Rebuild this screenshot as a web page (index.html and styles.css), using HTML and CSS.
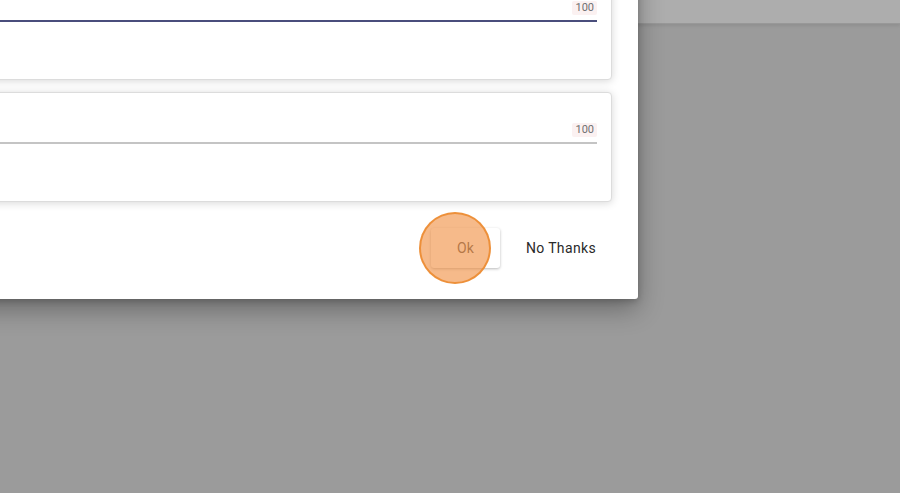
FILE: index.html
```html
<!DOCTYPE html>
<html lang="en">
<head>
  <meta charset="UTF-8">
  <meta name="viewport" content="width=device-width, initial-scale=1.0">
  <title>Dialog</title>
  <link rel="stylesheet" href="styles.css">
</head>
<body>
  <header class="topbar"></header>
  <main class="backdrop"></main>

  <div class="dialog">
    <div class="card">
      <div class="field focused">
        <span class="counter">100</span>
      </div>
    </div>
    <div class="card">
      <div class="field">
        <span class="counter">100</span>
      </div>
    </div>
    <div class="actions">
      <button class="btn btn-ok">Ok<span class="click-mark"></span></button>
      <button class="btn btn-text">No Thanks</button>
    </div>
  </div>
</body>
</html>
```

FILE: styles.css
```css
html, body {
  height: 100%;
}

body {
  margin: 0;
  font-family: Roboto, "Liberation Sans", sans-serif;
  background: #9b9b9b;
  display: flex;
  flex-direction: column;
  overflow: hidden;
}

.topbar {
  height: 23px;
  background: #adadad;
  border-bottom: 1px solid #989898;
  box-shadow: 0 2px 3px rgba(0, 0, 0, 0.08);
}

.backdrop {
  flex: 1;
}

.dialog {
  position: absolute;
  left: -300px;
  top: -54px;
  width: 938px;
  box-sizing: border-box;
  padding: 24px 26px 31px 24px;
  background: #ffffff;
  border-radius: 3px;
  box-shadow: 0 10px 26px rgba(0, 0, 0, 0.32), 0 2px 6px rgba(0, 0, 0, 0.2);
  display: flex;
  flex-direction: column;
  gap: 12px;
}

.card {
  height: 110px;
  box-sizing: border-box;
  padding: 22px 14px 0;
  background: #fff;
  border: 1px solid #dcdcdc;
  border-radius: 4px;
  box-shadow: 0 1px 8px rgba(0, 0, 0, 0.16);
}

.field {
  height: 29px;
  box-sizing: border-box;
  display: flex;
  justify-content: flex-end;
  align-items: flex-end;
  padding-bottom: 5px;
  border-bottom: 2px solid #c4c4c4;
}

.field.focused {
  border-bottom-color: #4a4e7c;
}

.counter {
  font-size: 11px;
  line-height: 14px;
  color: #707070;
  background: #fbf1f1;
  padding: 0 3px;
  border-radius: 2px;
}

.actions {
  display: flex;
  justify-content: flex-end;
  gap: 10px;
  margin-top: 14px;
}

.btn {
  height: 40px;
  border: none;
  font-family: inherit;
  font-size: 14px;
  color: #2a2a2a;
  background: transparent;
  cursor: pointer;
}

.btn-ok {
  position: relative;
  width: 69px;
  padding: 0;
  color: #5a5a5a;
  background: #fff;
  border-radius: 3px;
  box-shadow: 0 1px 3px rgba(0, 0, 0, 0.28);
}

.btn-text {
  padding: 0 16px;
  letter-spacing: 0.35px;
}

.click-mark {
  position: absolute;
  left: -12px;
  top: -16px;
  width: 68px;
  height: 68px;
  border-radius: 50%;
  background: rgba(240, 140, 60, 0.6);
  border: 2px solid rgba(236, 140, 50, 0.9);
}
```
